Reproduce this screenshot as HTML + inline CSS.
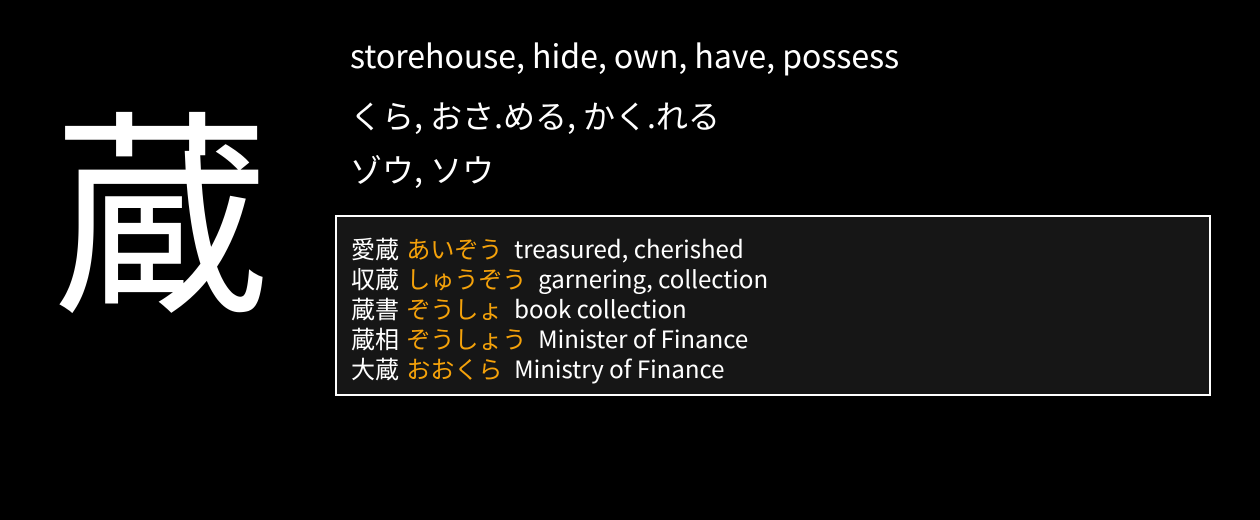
<!DOCTYPE html>
<html><head><meta charset="utf-8"><style>
html,body{margin:0;padding:0;background:#000;width:1260px;height:520px;overflow:hidden}
body{font-family:"Noto Sans CJK JP","Liberation Sans",sans-serif;color:#fff;position:relative}
.k{position:absolute;left:52px;top:50px;font-size:218px;line-height:300px}
.l{position:absolute;left:350px;font-size:32px;line-height:40px;white-space:nowrap}
.box{position:absolute;left:335px;top:215px;width:872px;height:177px;border:2px solid #fff;background:#161616}
.rows{position:absolute;left:14px;top:16px;font-size:24px;line-height:30px;white-space:nowrap}
.o{color:#f5a20a;margin-left:2px;margin-right:1px}
</style></head><body>
<div class="k">蔵</div>
<div class="l" style="top:35px">storehouse, hide, own, have, possess</div>
<div class="l" style="top:95px">くら, おさ.める, かく.れる</div>
<div class="l" style="top:149px">ゾウ, ソウ</div>
<div class="box"><div class="rows">
<div>愛蔵 <span class="o">あいぞう</span>&nbsp; treasured, cherished</div>
<div>収蔵 <span class="o">しゅうぞう</span>&nbsp; garnering, collection</div>
<div>蔵書 <span class="o">ぞうしょ</span>&nbsp; book collection</div>
<div>蔵相 <span class="o">ぞうしょう</span>&nbsp; Minister of Finance</div>
<div>大蔵 <span class="o">おおくら</span>&nbsp; Ministry of Finance</div>
</div></div>
</body></html>
